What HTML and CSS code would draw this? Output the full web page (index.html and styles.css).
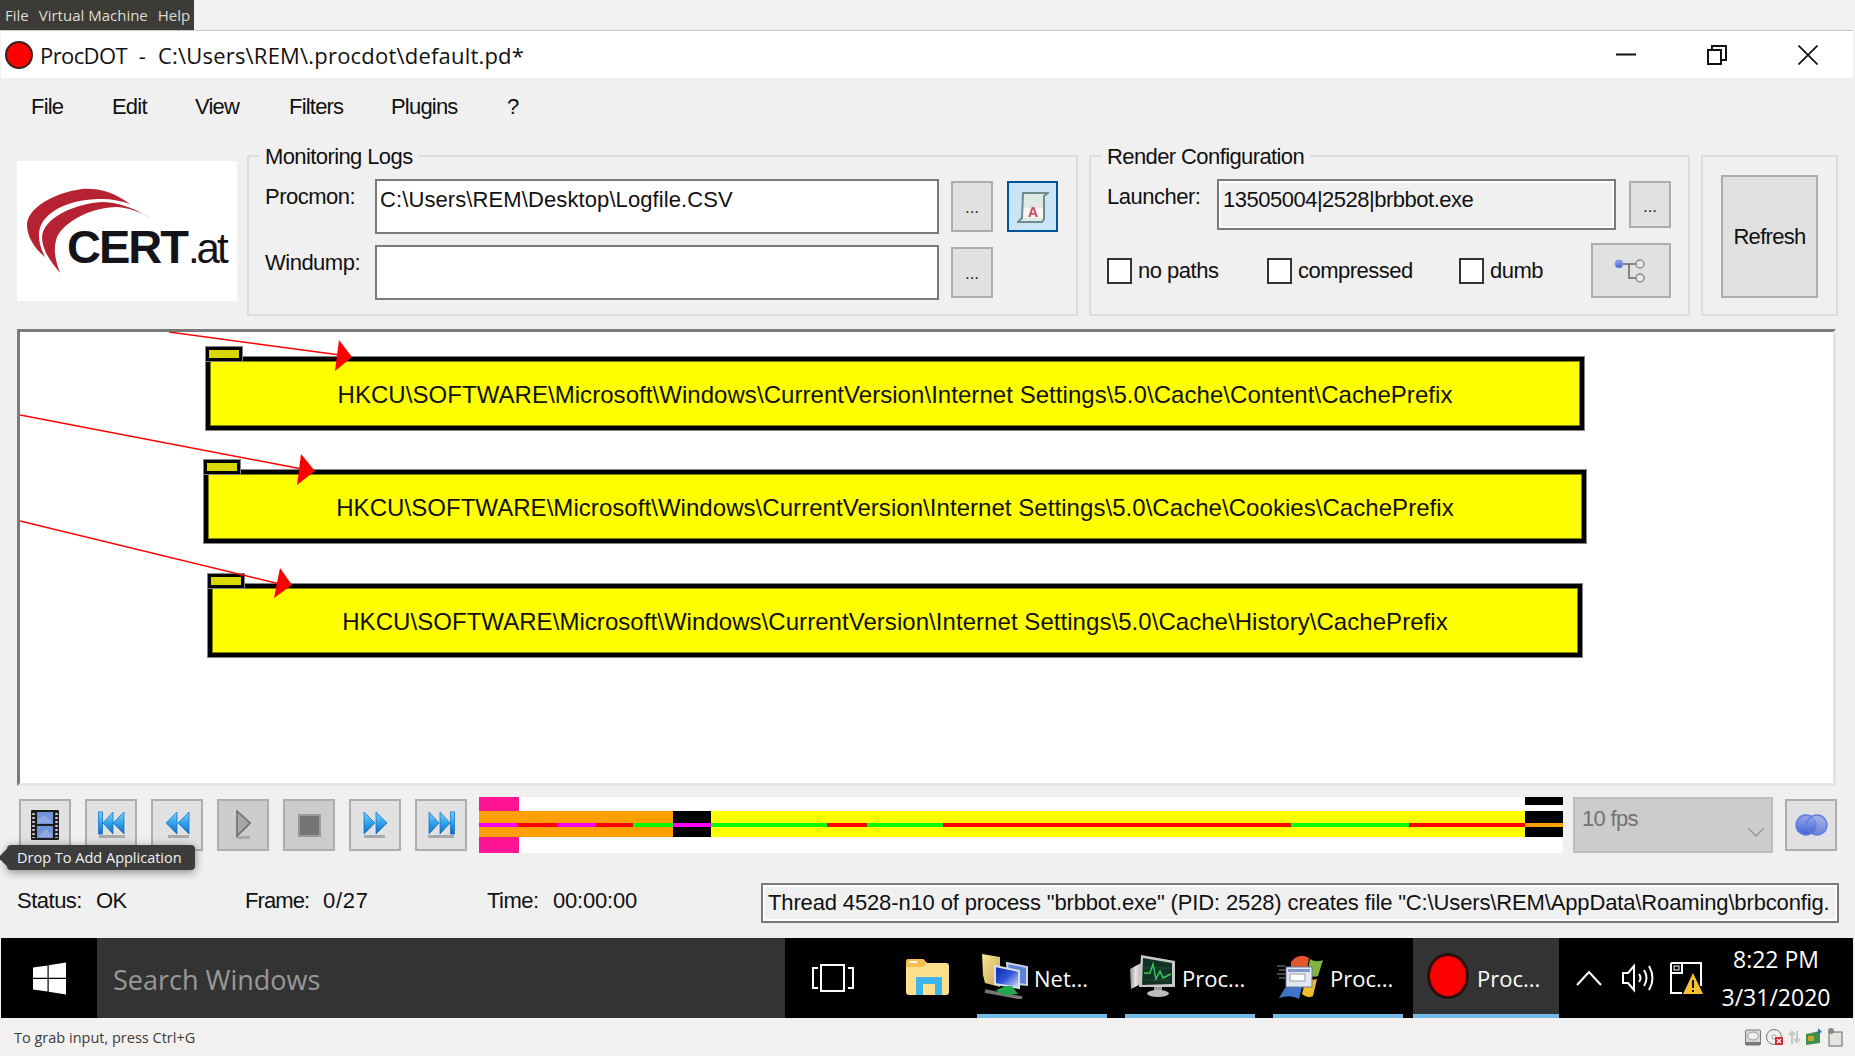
FILE: index.html
```html
<!DOCTYPE html>
<html lang="en">
<head>
    <meta charset="UTF-8">
    <title>ProcDOT</title>
    <link rel="stylesheet" href="styles.css">
</head>
<body>
    <svg class="defs" width="0" height="0">
        <defs>
            <linearGradient id="blue" x1="0" y1="0" x2="0" y2="1">
                <stop offset="0" stop-color="#7fd0f8"/>
                <stop offset="0.55" stop-color="#2c9fe6"/>
                <stop offset="1" stop-color="#1668c0"/>
            </linearGradient>
            <linearGradient id="gloss" x1="0" y1="0" x2="0" y2="1">
                <stop offset="0" stop-color="#9aa7ef"/>
                <stop offset="1" stop-color="#3f63cf"/>
            </linearGradient>
            <linearGradient id="screen" x1="0" y1="0" x2="1" y2="1">
                <stop offset="0" stop-color="#0a24a8"/>
                <stop offset="0.5" stop-color="#2f55d8"/>
                <stop offset="1" stop-color="#dfe8fb"/>
            </linearGradient>
            <linearGradient id="cream" x1="0" y1="0" x2="1" y2="1">
                <stop offset="0" stop-color="#f7e49a"/>
                <stop offset="1" stop-color="#c9a94c"/>
            </linearGradient>
            <linearGradient id="steel" x1="0" y1="0" x2="1" y2="0">
                <stop offset="0" stop-color="#8f8f8f"/>
                <stop offset="0.5" stop-color="#e6e6e6"/>
                <stop offset="1" stop-color="#b5b5b5"/>
            </linearGradient>
        </defs>
    </svg>

    <div class="vm-menu">
        <span>File</span><span>Virtual Machine</span><span>Help</span>
    </div>

    <div class="window">
        <div class="titlebar">
            <div class="rec-dot"></div>
            <div class="title-text"><span class="title-app">ProcDOT</span>&nbsp; -&nbsp; C:\Users\REM\.procdot\default.pd*</div>
            <div class="win-controls">
                <svg width="20" height="20" viewBox="0 0 20 20"><path d="M0 9.5H20" stroke="#111" stroke-width="2"/></svg>
                <svg width="20" height="20" viewBox="0 0 20 20" fill="none" stroke="#111" stroke-width="2"><rect x="1" y="5" width="13" height="14"/><path d="M5 5V1H19V15H14"/></svg>
                <svg width="20" height="20" viewBox="0 0 20 20"><path d="M0.5 0.5L19.5 19.5M19.5 0.5L0.5 19.5" stroke="#111" stroke-width="1.7"/></svg>
            </div>
        </div>

        <div class="menu">
            <span>File</span><span>Edit</span><span>View</span><span>Filters</span><span>Plugins</span><span>?</span>
        </div>

        <div class="toolbar">
            <div class="logo">
                <svg class="swoosh" width="220" height="140" viewBox="0 0 220 140">
                    <path fill="#b72233" d="M113 43C95 30 80 27 65 28C35 32 10 48 10 64C10 76 18 88 28 96C22 84 20 74 24 64C32 48 55 38 85 38C95 38 105 40 113 43Z"/>
                    <path fill="#b72233" d="M133 57C115 46 100 41 85 41C55 43 26 58 25 76C25 90 35 102 43 112C38 98 36 88 40 76C48 60 75 46 100 46C112 47 124 51 133 57Z"/>
                </svg>
                <div class="logo-text"><b>CERT</b><span>.at</span></div>
            </div>

            <div class="group logs">
                <div class="group-title">Monitoring Logs</div>
                <div class="log-row">
                    <div class="field-label">Procmon:</div>
                    <div class="field">C:\Users\REM\Desktop\Logfile.CSV</div>
                    <div class="btn dots">...</div>
                    <div class="btn btn-active">
                        <svg width="32" height="32" viewBox="0 0 32 32">
                            <path d="M6 2H31L27 5V28L25 31H1L5 27Z" fill="#dfe9e6" stroke="#6f8c8c" stroke-width="2"/>
                            <path d="M7 17H26V27H6Z" fill="#f6f6f2"/>
                            <text x="16" y="26" class="doc-a">A</text>
                        </svg>
                    </div>
                </div>
                <div class="log-row">
                    <div class="field-label">Windump:</div>
                    <div class="field"></div>
                    <div class="btn dots">...</div>
                </div>
            </div>

            <div class="group render">
                <div class="group-title">Render Configuration</div>
                <div class="launch-row">
                    <div class="field-label">Launcher:</div>
                    <div class="field field-ro">13505004|2528|brbbot.exe</div>
                    <div class="btn dots dots-short">...</div>
                </div>
                <div class="check-row">
                    <div class="check no-paths"><i></i>no paths</div>
                    <div class="check compressed"><i></i>compressed</div>
                    <div class="check dumb"><i></i>dumb</div>
                    <div class="btn btn-graph">
                        <svg width="34" height="28" viewBox="0 0 34 28" fill="none">
                            <path d="M6 7H26M15 7V21H26" stroke="#666" stroke-width="1.5"/>
                            <circle cx="5" cy="7" r="4" fill="url(#gloss)" stroke="#7f93e8"/>
                            <circle cx="26" cy="7" r="4" fill="#e8e8e8" stroke="#8c8c8c" stroke-width="1.5"/>
                            <circle cx="26" cy="21" r="4" fill="#e8e8e8" stroke="#8c8c8c" stroke-width="1.5"/>
                        </svg>
                    </div>
                </div>
            </div>

            <div class="group refresh">
                <div class="btn btn-refresh">Refresh</div>
            </div>
        </div>

        <div class="graph">
            <svg class="edges" width="1813" height="451" viewBox="0 0 1813 451">
                <path d="M149 0L320 23" stroke="#f00" stroke-width="1.4"/>
                <path d="M319 8L332 25L315 39Z" fill="#f00"/>
                <path d="M0 83L282 137" stroke="#f00" stroke-width="1.4"/>
                <path d="M281 122L295 139L277 153Z" fill="#f00"/>
                <path d="M0 189L260 252" stroke="#f00" stroke-width="1.4"/>
                <path d="M260 236L272 253L254 266Z" fill="#f00"/>
            </svg>
            <div class="node node-1"><div class="tab"></div>HKCU\SOFTWARE\Microsoft\Windows\CurrentVersion\Internet Settings\5.0\Cache\Content\CachePrefix</div>
            <div class="node node-2"><div class="tab"></div>HKCU\SOFTWARE\Microsoft\Windows\CurrentVersion\Internet Settings\5.0\Cache\Cookies\CachePrefix</div>
            <div class="node node-3"><div class="tab"></div>HKCU\SOFTWARE\Microsoft\Windows\CurrentVersion\Internet Settings\5.0\Cache\History\CachePrefix</div>
        </div>

        <div class="player">
            <div class="btn btn-media">
                <svg width="28" height="30" viewBox="0 0 28 30">
                    <rect width="28" height="30" rx="1" fill="#1c1c1c"/>
                    <rect x="6" y="2" width="16" height="12" fill="#6f93d6"/>
                    <rect x="6" y="16" width="16" height="12" fill="#6f93d6"/>
                    <path d="M7 9L13 5L21 11V13H7Z" fill="#8fa9de"/>
                    <path d="M8 26L15 19L21 25V27H8Z" fill="#8fa9de"/>
                    <path d="M2.5 3V28M25.5 3V28" stroke="#cfcfcf" stroke-width="2.4" stroke-dasharray="2 2"/>
                </svg>
            </div>
            <div class="btn btn-media">
                <svg width="27" height="28" viewBox="0 0 27 28"><rect x="1" y="24" width="26" height="3" fill="#a9a9a9"/><g fill="url(#blue)" stroke="#1c74c8" stroke-width="0.8"><rect x="0.5" y="1" width="4" height="22"/><path d="M15 1V23L5 12Z"/><path d="M26 1V23L15 12Z"/></g></svg>
            </div>
            <div class="btn btn-media">
                <svg width="25" height="28" viewBox="0 0 25 28"><rect x="3" y="24" width="21" height="3" fill="#a9a9a9"/><g fill="url(#blue)" stroke="#1c74c8" stroke-width="0.8"><path d="M12 1V23L1 12Z"/><path d="M24 1V23L13 12Z"/></g></svg>
            </div>
            <div class="btn btn-media btn-off">
                <svg width="15" height="30" viewBox="0 0 15 30"><rect x="1" y="26" width="13" height="3" fill="#a9a9a9"/><path d="M1 1L14 13L1 26Z" fill="#a8a8a8" stroke="#6e6e6e" stroke-width="1.6"/></svg>
            </div>
            <div class="btn btn-media btn-off">
                <svg width="23" height="23" viewBox="0 0 23 23"><rect x="1" y="1" width="21" height="21" fill="#757575" stroke="#9a9a9a" stroke-width="2"/></svg>
            </div>
            <div class="btn btn-media">
                <svg width="25" height="28" viewBox="0 0 25 28"><rect x="1" y="24" width="21" height="3" fill="#a9a9a9"/><g fill="url(#blue)" stroke="#1c74c8" stroke-width="0.8"><path d="M1 1V23L12 12Z"/><path d="M13 1V23L24 12Z"/></g></svg>
            </div>
            <div class="btn btn-media">
                <svg width="27" height="28" viewBox="0 0 27 28"><rect x="0" y="24" width="26" height="3" fill="#a9a9a9"/><g fill="url(#blue)" stroke="#1c74c8" stroke-width="0.8"><path d="M1 1V23L11 12Z"/><path d="M12 1V23L22 12Z"/><rect x="22.5" y="1" width="4" height="22"/></g></svg>
            </div>

            <div class="timeline">
                <div class="tl-cap"><div class="tl-pink"></div><div class="tl-black-top"></div></div>
                <div class="tl-fill tl-fill-top">
                    <div class="orange"></div><div class="black"></div><div class="yellow"></div><div class="black"></div>
                </div>
                <div class="tl-stripe">
                    <div class="s-m" style="flex:38"></div><div class="s-r" style="flex:40"></div>
                    <div class="s-m" style="flex:38"></div><div class="s-r" style="flex:38"></div>
                    <div class="s-g" style="flex:40"></div><div class="s-m" style="flex:38"></div>
                    <div class="s-g" style="flex:116"></div><div class="s-r" style="flex:40"></div>
                    <div class="s-g" style="flex:76"></div><div class="s-r" style="flex:348"></div>
                    <div class="s-g" style="flex:118"></div><div class="s-r" style="flex:116"></div>
                    <div class="s-o" style="flex:38"></div>
                </div>
                <div class="tl-fill tl-fill-bot">
                    <div class="orange"></div><div class="black"></div><div class="yellow"></div><div class="black"></div>
                </div>
                <div class="tl-cap"><div class="tl-pink"></div></div>
            </div>

            <div class="fps">
                <span>10 fps</span>
                <svg width="18" height="10" viewBox="0 0 18 10" fill="none"><path d="M1 1L9 9L17 1" stroke="#999" stroke-width="1.5"/></svg>
            </div>
            <div class="btn btn-media btn-blend">
                <svg width="33" height="22" viewBox="0 0 33 22" fill="url(#gloss)" stroke="#5f7de0" stroke-width="1.4"><circle cx="11" cy="11" r="10"/><circle cx="22" cy="11" r="10" fill-opacity="0.75"/></svg>
            </div>
        </div>

        <div class="status">
            <div class="stat stat-status"><span>Status:</span>OK</div>
            <div class="stat stat-frame"><span>Frame:</span>0/27</div>
            <div class="stat stat-time"><span>Time:</span>00:00:00</div>
            <div class="message"><div>Thread 4528-n10 of process "brbbot.exe" (PID: 2528) creates file "C:\Users\REM\AppData\Roaming\brbconfig.</div></div>
        </div>

        <div class="taskbar">
            <div class="start">
                <svg width="33" height="33" viewBox="0 0 33 33" fill="#fff"><path d="M0 5.5L14.5 3.4V15.8H0Z"/><path d="M15.7 3.2L33 0.5V15.8H15.7Z"/><path d="M0 17H14.5V29.6L0 27.5Z"/><path d="M15.7 17H33V32.5L15.7 29.8Z"/></svg>
            </div>
            <div class="search">Search Windows</div>
            <div class="task-icon task-view">
                <svg width="42" height="28" viewBox="0 0 42 28" fill="none" stroke="#fff" stroke-width="2"><rect x="9" y="1" width="23" height="26"/><path d="M6 4H1V24H6M36 4H41V24H36"/></svg>
            </div>
            <div class="task-icon task-folder">
                <svg width="43" height="36" viewBox="0 0 43 36">
                    <path d="M0 3Q0 0 3 0H17L21 4H40Q43 4 43 7V33Q43 36 40 36H3Q0 36 0 33Z" fill="#fde08e"/>
                    <path d="M0 3Q0 0 3 0H17L21 4L17 8H0Z" fill="#f8c04a"/>
                    <path d="M3 3H11" stroke="#fff" stroke-width="2"/>
                    <path d="M10 36V18H36V36H29V25H17V36Z" fill="#3db5ea"/>
                </svg>
            </div>
            <div class="task-item item-net">
                <svg width="46" height="46" viewBox="0 0 46 46">
                    <path d="M0 1L18 4V34L3 30L1 22Z" fill="url(#cream)"/>
                    <path d="M25 10L45 14V32L27 30Z" fill="#5f82d6" stroke="#c9d2e6" stroke-width="2"/>
                    <path d="M13 13L37 18V35L13 31Z" fill="url(#screen)" stroke="#d9dfec" stroke-width="2"/>
                    <path d="M3 38L40 45" stroke="#777" stroke-width="3.5"/>
                    <path d="M24 33H30L33 37L36 41L20 42L14 37Z" fill="#21a84a"/>
                </svg>
                <span>Net...</span>
            </div>
            <div class="task-item item-mon">
                <svg width="45" height="42" viewBox="0 0 45 42">
                    <path d="M0 14L11 8V29L1 34Z" fill="url(#steel)"/>
                    <path d="M11 0L45 6V32L9 32Z" fill="#c9c9c9"/>
                    <path d="M13 3L42 8V29L12 30Z" fill="#123324"/>
                    <path d="M14 13H40M14 19H40M14 25H40" stroke="#28503a" stroke-width="0.8"/>
                    <path d="M14 18L20 18L23 9L26 24L30 16L33 23L41 19" fill="none" stroke="#35c85a" stroke-width="1.4"/>
                    <rect x="24" y="32" width="8" height="5" fill="#9e9e9e"/>
                    <ellipse cx="28" cy="38.5" rx="11" ry="3.5" fill="#bdbdbd"/>
                </svg>
                <span>Proc...</span>
            </div>
            <div class="task-item item-win">
                <svg width="46" height="45" viewBox="0 0 46 45">
                    <path d="M14 8Q22 -2 32 4L30 16Q22 12 14 18Z" fill="#e2582a"/>
                    <path d="M33 5Q39 9 46 6L41 22Q36 24 30 20Z" fill="#7fb53c"/>
                    <path d="M8 34Q16 28 25 33L22 45Q14 40 2 44Z" fill="#3f74c6"/>
                    <path d="M29 24Q35 27 40 25L36 42Q31 45 25 40Z" fill="#f2bd2b"/>
                    <rect x="9" y="13" width="26" height="20" fill="#e2e8f3" stroke="#6f7f9c"/>
                    <rect x="11" y="15" width="22" height="3" fill="#7f97c9"/>
                    <rect x="13" y="20" width="15" height="7" fill="#fff" stroke="#999"/>
                    <path d="M0 12H8M2 16H8M0 20H8M2 24H8" stroke="#8c8c8c"/>
                </svg>
                <span>Proc...</span>
            </div>
            <div class="task-item item-active">
                <div class="rec-dot rec-dot-big"></div>
                <span>Proc...</span>
            </div>
            <div class="tray">
                <svg class="tray-up" width="26" height="16" viewBox="0 0 26 16" fill="none"><path d="M1 15L13 2L25 15" stroke="#fff" stroke-width="2"/></svg>
                <svg class="tray-vol" width="33" height="30" viewBox="0 0 33 30" fill="none" stroke="#fff" stroke-width="2"><path d="M1 10H6L12 3V27L6 20H1Z"/><path d="M17 11Q20 15 17 19M22 7Q27 15 22 23M27 3Q34 15 27 27"/></svg>
                <svg class="tray-net" width="33" height="33" viewBox="0 0 33 33" fill="none"><path d="M1 1H31V24M1 1V31H12M1 11H12V1" stroke="#fff" stroke-width="2"/><rect x="4" y="4" width="5" height="4" stroke="#fff"/><path d="M23 11L33 32H13Z" fill="#fbc02d"/><path d="M23 18V26M23 28V30" stroke="#111" stroke-width="2"/></svg>
                <div class="clock">
                    <div>8:22 PM</div>
                    <div>3/31/2020</div>
                </div>
            </div>
        </div>
    </div>

    <div class="tooltip">Drop To Add Application</div>

    <div class="vm-status">
        <span>To grab input, press Ctrl+G</span>
        <div class="vm-icons">
            <svg width="16" height="18" viewBox="0 0 16 18"><rect x="0.5" y="2" width="15" height="15" rx="1" fill="#d8d8d8" stroke="#777"/><ellipse cx="8" cy="8" rx="5.5" ry="4" fill="#eee" stroke="#999"/><rect x="1" y="14" width="14" height="3" fill="#777"/></svg>
            <svg width="17" height="18" viewBox="0 0 17 18"><circle cx="8" cy="9" r="7.5" fill="#eee" stroke="#777"/><circle cx="8" cy="9" r="2" fill="#fff" stroke="#999"/><rect x="9" y="9" width="8" height="8" rx="1" fill="#d8232a"/><path d="M11 11L15 15M15 11L11 15" stroke="#fff" stroke-width="1.4"/></svg>
            <svg width="13" height="14" viewBox="0 0 13 14" fill="none" stroke="#c4c8c4" stroke-width="2"><path d="M4 14V2M1 5L4 2L7 5M9 1V12M6 9L9 12L12 9"/></svg>
            <svg width="16" height="18" viewBox="0 0 16 18"><path d="M0 6L14 3V15L0 17Z" fill="#3f8f4f"/><rect x="2" y="8" width="6" height="5" fill="#c9a227"/><path d="M12 0V6L16 4Z" fill="#2f6fc0"/></svg>
            <svg width="16" height="19" viewBox="0 0 16 19"><rect x="2" y="4" width="13" height="14" fill="#e4e4e0" stroke="#666"/><circle cx="4" cy="3" r="3" fill="#888"/></svg>
        </div>
    </div>
</body>
</html>
```

FILE: styles.css
```css
* {
    box-sizing: border-box;
}

body {
    margin: 0;
    position: relative;
    width: 1855px;
    height: 1056px;
    overflow: hidden;
    background-color: #f2f1f0;
    font-family: "Liberation Sans", Arial, sans-serif;
    color: #111;
}

.defs {
    position: absolute;
}

/* VM host chrome */
.vm-menu {
    display: flex;
    gap: 10px;
    width: 194px;
    height: 30px;
    padding-left: 5px;
    background-color: #3c3b37;
    color: #dfdbd2;
    font-family: "Open Sans", "Noto Sans", sans-serif;
    font-size: 15px;
    line-height: 30px;
}

.vm-status {
    display: flex;
    justify-content: space-between;
    align-items: center;
    height: 38px;
    padding: 0 12px 0 14px;
    color: #3c3c3c;
    font-family: "Open Sans", "Noto Sans", sans-serif;
    font-size: 14.5px;
}

.vm-icons {
    display: flex;
    align-items: center;
    gap: 5px;
}

.tooltip {
    position: absolute;
    z-index: 2;
    left: 7px;
    top: 845px;
    width: 188px;
    height: 25px;
    padding-left: 10px;
    border-radius: 4px;
    background-color: #3c3c3c;
    box-shadow: 0 2px 10px rgba(0, 0, 0, 0.45);
    color: #f2f2f2;
    font-family: "Open Sans", "Noto Sans", sans-serif;
    font-size: 14.5px;
    line-height: 25px;
    white-space: nowrap;
}

.tooltip::before {
    content: "";
    position: absolute;
    left: -6px;
    top: 6px;
    width: 13px;
    height: 13px;
    background-color: #3c3c3c;
    transform: rotate(45deg);
    z-index: -1;
}

/* Guest window */
.window {
    width: 1852px;
    margin-left: 1px;
    height: 988px;
    border-top: 1px solid #c8c8c8;
    background-color: #f0f0f0;
}

.titlebar {
    display: flex;
    align-items: center;
    height: 47px;
    padding-left: 4px;
    background-color: #fff;
}

.rec-dot {
    width: 28px;
    height: 28px;
    border-radius: 50%;
    background-color: #f00;
    border: 2px solid #3a2020;
}

.title-text {
    margin-left: 7px;
    font-family: "Open Sans", "Noto Sans", sans-serif;
    font-size: 22px;
    letter-spacing: 0.2px;
}

.title-app {
    letter-spacing: -0.6px;
}

.win-controls {
    display: flex;
    gap: 71px;
    margin-left: auto;
    margin-right: 35px;
}

.menu {
    display: flex;
    height: 77px;
    padding: 0 0 0 30px;
    font-size: 22px;
    letter-spacing: -0.8px;
    line-height: 58px;
}

.menu span:nth-child(1) { width: 81px; }
.menu span:nth-child(2) { width: 83px; }
.menu span:nth-child(3) { width: 94px; }
.menu span:nth-child(4) { width: 102px; }
.menu span:nth-child(5) { width: 116px; }

.toolbar {
    display: flex;
    gap: 11px;
    height: 161px;
    padding-left: 16px;
}

.logo {
    position: relative;
    width: 220px;
    height: 140px;
    margin: 6px -1px 0 0;
    background-color: #fff;
}

.swoosh {
    position: absolute;
    left: 0;
    top: 0;
}

.logo-text {
    position: absolute;
    left: 50px;
    top: 56px;
    font-size: 47px;
    line-height: 60px;
    white-space: nowrap;
    color: #14131a;
}

.logo-text b {
    letter-spacing: -2px;
}

.logo-text span {
    font-size: 42px;
    letter-spacing: -3px;
    margin-left: 1px;
}

.group {
    border: 2px solid #dddddd;
    height: 161px;
}

.group-title {
    width: fit-content;
    margin: -14px 0 0 10px;
    padding: 0 6px;
    height: 26px;
    background-color: #f0f0f0;
    font-size: 22px;
    line-height: 28px;
    letter-spacing: -0.6px;
}

.field-label {
    width: 110px;
    flex: none;
    padding-top: 2px;
    font-size: 22px;
    letter-spacing: -0.5px;
    line-height: 32px;
}

.field {
    height: 55px;
    border: 2px solid #7a7a7a;
    background-color: #fff;
    padding: 4px 0 0 3px;
    font-size: 22px;
    letter-spacing: 0.1px;
    line-height: 30px;
    white-space: nowrap;
    overflow: hidden;
}

.field-ro {
    width: 399px;
    height: 51px;
    background-color: #f0f0f0;
    box-shadow: inset 0 0 0 2px #fff;
    padding-left: 4px;
    letter-spacing: -0.5px;
}

.btn {
    display: flex;
    align-items: center;
    justify-content: center;
    flex: none;
    border: 2px solid #adadad;
    background-color: #e1e1e1;
}

.dots {
    width: 42px;
    height: 51px;
    margin-top: 2px;
    align-items: flex-end;
    padding-bottom: 12px;
    font-size: 17px;
    color: #222;
}

.dots-short {
    height: 47px;
    padding-bottom: 9px;
}

.btn-active {
    width: 51px;
    height: 51px;
    margin: 2px 0 0 14px;
    border-color: #005499;
    background-color: #cce4f7;
}

.doc-a {
    font-size: 14px;
    font-weight: bold;
    fill: #d0455f;
    text-anchor: middle;
}

/* Monitoring Logs */
.logs {
    width: 831px;
}

.logs .field {
    width: 564px;
    margin-right: 12px;
}

.log-row {
    display: flex;
    height: 66px;
    padding-left: 16px;
}

.group-title + .log-row {
    margin-top: 10px;
}

/* Render Configuration */
.render {
    width: 601px;
}

.launch-row {
    display: flex;
    height: 64px;
    margin-top: 10px;
    padding-left: 16px;
}

.launch-row .field {
    margin-right: 13px;
}

.check-row {
    display: flex;
    align-items: center;
    height: 55px;
    padding-left: 16px;
    font-size: 22px;
    letter-spacing: -0.5px;
}

.check {
    display: flex;
    align-items: center;
    gap: 6px;
}

.check i {
    display: block;
    width: 25px;
    height: 26px;
    border: 2px solid #333;
    background-color: #fff;
}

.no-paths { width: 160px; }
.compressed { width: 192px; }
.dumb { width: 132px; }

.btn-graph {
    width: 80px;
    height: 55px;
}

/* Refresh */
.refresh {
    width: 137px;
    padding: 18px 0 0 18px;
}

.btn-refresh {
    width: 97px;
    height: 123px;
    font-size: 22px;
    letter-spacing: -0.7px;
}

/* Graph canvas */
.graph {
    position: relative;
    width: 1819px;
    height: 457px;
    margin: 13px 0 0 16px;
    background-color: #fff;
    border-style: solid;
    border-color: #7a7a7a #e4e4e4 #e4e4e4 #7a7a7a;
    border-width: 3px;
}

.edges {
    position: absolute;
    left: 0;
    top: 0;
    z-index: 1;
}

.node {
    position: absolute;
    display: flex;
    align-items: center;
    justify-content: center;
    height: 73px;
    padding-top: 2px;
    background-color: #ff0;
    border: 4px solid #000;
    box-shadow: 0 0 0 1px #858585, inset 0 0 0 1px #808000;
    font-size: 24px;
    letter-spacing: 0.05px;
    white-space: nowrap;
}

.tab {
    position: absolute;
    left: -4px;
    top: -14px;
    width: 36px;
    height: 14px;
    background-color: #d8d800;
    border: 3px solid #000;
    box-shadow: 0 0 0 1px #858585;
}

.node-1 { left: 186px; top: 25px; width: 1378px; }
.node-2 { left: 184px; top: 138px; width: 1382px; }
.node-3 { left: 188px; top: 252px; width: 1374px; }

/* Player row */
.player {
    display: flex;
    align-items: center;
    gap: 14px;
    height: 56px;
    margin-top: 11px;
    padding-left: 18px;
}

.btn-media {
    width: 52px;
    height: 52px;
}

.btn-off {
    background-color: #ccc;
}

.timeline {
    width: 1084px;
    height: 56px;
    margin-left: -2px;
    background-color: #fff;
}

.tl-cap {
    display: flex;
    justify-content: space-between;
    height: 14px;
}

.tl-pink {
    width: 40px;
    background-color: #ff1493;
}

.tl-black-top {
    width: 38px;
    height: 8px;
    background-color: #000;
}

.tl-cap:last-child {
    height: 16px;
}

.tl-fill {
    display: flex;
}

.tl-fill-top { height: 12px; }
.tl-fill-bot { height: 10px; }

.orange { width: 194px; background-color: #ffa000; }
.black { width: 38px; background-color: #000; }
.yellow { flex: 1; background-color: #ff0; }

.tl-stripe {
    display: flex;
    height: 4px;
}

.s-m { background-color: #f0f; }
.s-r { background-color: #f00; }
.s-g { background-color: #0f0; }
.s-o { background-color: #ffa000; }

.fps {
    display: flex;
    justify-content: space-between;
    width: 200px;
    height: 56px;
    margin-left: -4px;
    padding: 7px 6px 0 7px;
    background-color: #ccc;
    border: 2px solid #bebebe;
    color: #737373;
    font-size: 22px;
    letter-spacing: -0.7px;
}

.fps svg {
    margin-top: 21px;
}

.btn-blend {
    margin-left: -2px;
}

/* Status row */
.status {
    display: flex;
    align-items: center;
    height: 40px;
    margin-top: 30px;
    padding-left: 16px;
    font-size: 22px;
    letter-spacing: -0.5px;
}

.stat {
    margin-top: -4px;
}

.stat span {
    display: inline-block;
}

.stat-status { width: 228px; }
.stat-status span { width: 79px; }
.stat-frame { width: 242px; letter-spacing: 0.7px; }
.stat-frame span { width: 78px; letter-spacing: -0.9px; }
.stat-time { width: 274px; letter-spacing: -0.2px; }
.stat-time span { width: 66px; letter-spacing: -0.5px; }

.message {
    width: 1078px;
    height: 40px;
    border: 2px solid #7a7a7a;
    box-shadow: inset 0 0 0 2px #fff;
    padding: 0 4px 0 5px;
    line-height: 36px;
    letter-spacing: -0.14px;
}

.message div {
    white-space: nowrap;
}

/* Windows taskbar */
.taskbar {
    display: flex;
    height: 80px;
    margin-top: 15px;
    background-color: #000;
    color: #fff;
    font-family: "Open Sans", "Noto Sans", sans-serif;
}

.start {
    display: flex;
    align-items: center;
    justify-content: center;
    width: 96px;
}

.search {
    width: 688px;
    padding-left: 16px;
    background-color: #333;
    color: #999;
    font-size: 27px;
    line-height: 84px;
}

.task-icon {
    display: flex;
    align-items: center;
    justify-content: center;
}

.task-view {
    width: 96px;
}

.task-folder {
    width: 92px;
    padding-bottom: 2px;
}

.task-item {
    display: flex;
    align-items: center;
    gap: 6px;
    width: 130px;
    margin-right: 18px;
    padding-left: 5px;
    border-bottom: 4px solid #76b9ed;
    font-size: 22px;
}

.task-item span {
    padding-top: 3px;
}

.item-net {
    margin-left: 4px;
}

.item-win {
    padding-left: 4px;
    gap: 7px;
}

.item-mon {
    gap: 7px;
}

.item-active {
    width: 146px;
    margin: 0 0 0 -8px;
    padding-left: 14px;
    gap: 8px;
    background-color: #333;
}

.rec-dot-big {
    width: 42px;
    height: 46px;
    border: 3px solid #2a1010;
}

.tray {
    flex: 1;
    display: flex;
    align-items: center;
    padding-left: 17px;
}

.tray-vol { margin-left: 20px; }
.tray-net { margin-left: 15px; }

.clock {
    width: 120px;
    margin-left: 13px;
    font-size: 23px;
    line-height: 38px;
    text-align: center;
}
```
